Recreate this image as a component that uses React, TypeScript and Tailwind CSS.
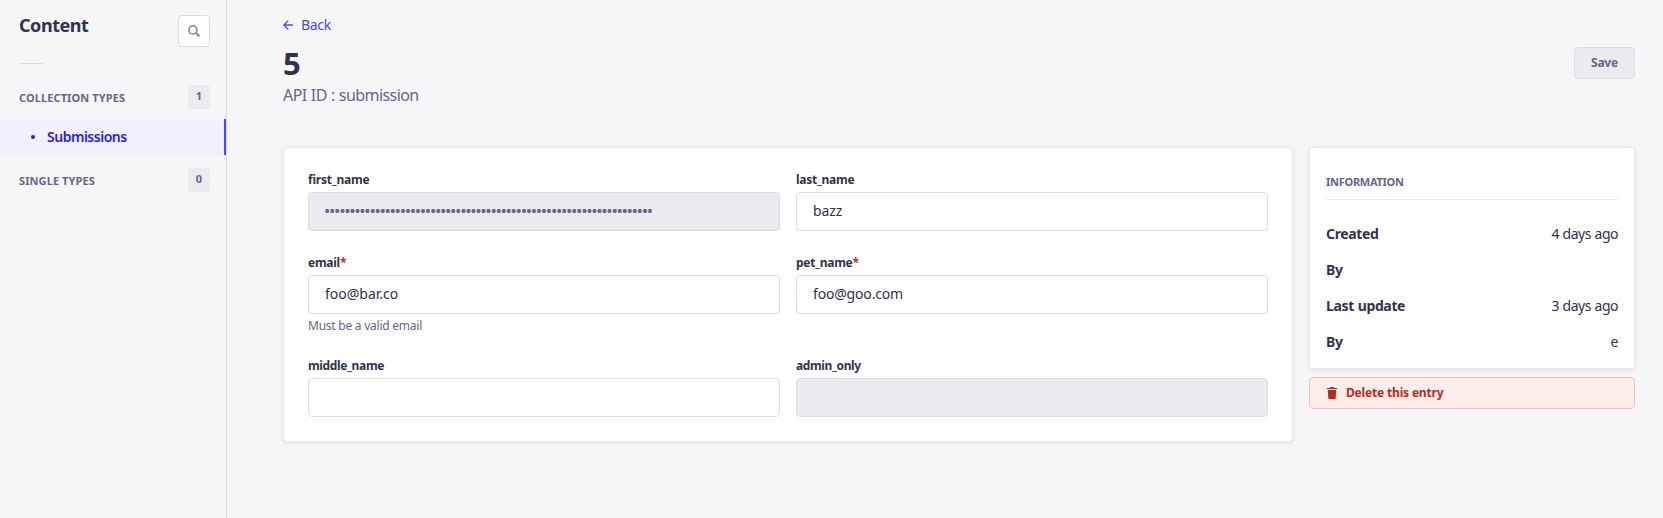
import type { ReactNode } from "react";

function SearchIcon() {
  return (
    <svg width="12" height="12" viewBox="0 0 12 12" fill="none" stroke="#8e8ea9">
      <circle cx="4.9" cy="4.9" r="4" strokeWidth="1.8" />
      <path d="M8 8l3.3 3.3" strokeWidth="2.4" />
    </svg>
  );
}

function BackIcon() {
  return (
    <svg width="10" height="10" viewBox="0 0 10 10" fill="none" stroke="#4945ff" strokeWidth="1.3">
      <path d="M10 5H1M5.2 0.6L0.9 5l4.3 4.4" />
    </svg>
  );
}

function TrashIcon() {
  return (
    <svg width="10" height="12" viewBox="0 0 10 12" fill="#b72b1a">
      <path d="M0 0.9h3.2V0h3.6v0.9H10v1.2H0z" />
      <path d="M0.7 3h8.6L8.6 11.4a.7.7 0 0 1-.7.6H2.1a.7.7 0 0 1-.7-.6z" />
    </svg>
  );
}

function SectionHeader({ title, count }: { title: string; count: number }) {
  return (
    <div className="flex h-6 items-center justify-between pl-[19px] pr-4">
      <h3 className="pt-[2px] text-[11px] font-bold leading-4 tracking-[0.1px] text-[#666687]">{title}</h3>
      <span className="flex h-6 w-[22px] items-center justify-center rounded bg-[#eaeaef] pb-px text-[11px] font-bold text-[#666687]">
        {count}
      </span>
    </div>
  );
}

type FieldProps = {
  label: string;
  labelClass: string;
  required?: boolean;
  disabled?: boolean;
  hint?: string;
  children?: ReactNode;
};

function Field({ label, labelClass, required, disabled, hint, children }: FieldProps) {
  return (
    <div className="flex flex-col gap-1">
      <label className="flex h-4 text-xs font-bold leading-4 text-[#32324d]">
        <span className={labelClass}>{label}</span>
        {required && <span className="text-[#d02b20]">*</span>}
      </label>
      <div
        className={
          disabled
            ? "flex h-[39px] items-center rounded border border-[#dcdce4] bg-[#eaeaef] px-4 text-sm text-[#666687]"
            : "flex h-[39px] items-center rounded border border-[#dcdce4] bg-white px-4 pb-[2px] text-sm text-[#32324d]"
        }
      >
        {children}
      </div>
      {hint && <p className="text-xs leading-4 tracking-[-0.24px] text-[#666687]">{hint}</p>}
    </div>
  );
}

function InfoRow({ label, value }: { label: string; value?: string }) {
  return (
    <div className="flex h-5 items-center justify-between text-sm leading-5 text-[#32324d]">
      <span className="font-bold tracking-[-0.36px] [word-spacing:0.5px]">{label}</span>
      <span className="tracking-[-0.5px] [word-spacing:0.5px]">{value}</span>
    </div>
  );
}

export default function App() {
  return (
    <div className="flex h-[518px] w-full overflow-hidden bg-[#f6f6f9] font-['Noto_Sans',sans-serif] text-[#32324d]">
      <nav className="w-[227px] shrink-0 border-r border-[#dcdce4] pt-[15px]">
        <div className="flex items-start justify-between pl-[19px] pr-4">
          <h2 className="-mt-[1px] text-lg font-bold leading-[22px] tracking-[-0.45px]">Content</h2>
          <button className="flex h-8 w-8 items-center justify-center rounded border border-[#dcdce4] bg-white">
            <SearchIcon />
          </button>
        </div>
        <hr className="ml-[19px] mt-4 h-px w-6 border-0 bg-[#dcdce4]" />
        <div className="mt-[21px]">
          <SectionHeader title="COLLECTION TYPES" count={1} />
        </div>
        <a className="mt-[10px] flex h-9 items-center border-r-2 border-[#4945ff] bg-[#f0f0ff] pl-[31px] text-sm font-semibold text-[#271fe0]">
          <span className="mr-3 h-1 w-1 rounded-full bg-[#271fe0]" />
          <span className="tracking-[-0.49px]">Submissions</span>
        </a>
        <div className="mt-[13px]">
          <SectionHeader title="SINGLE TYPES" count={0} />
        </div>
      </nav>

      <main className="flex-1 pl-14 pr-7 pt-[15px]">
        <a className="flex h-5 items-center gap-2 text-sm leading-5 text-[#4945ff]">
          <BackIcon />
          <span className="tracking-[-0.3px]">Back</span>
        </a>
        <div className="mt-3 flex h-8 items-center justify-between">
          <h1 className="text-[31px] font-bold leading-8">5</h1>
          <button className="flex h-8 items-center rounded border border-[#dcdce4] bg-[#eaeaef] px-4 text-xs font-bold tracking-[-0.2px] text-[#666687]">
            Save
          </button>
        </div>
        <p className="mt-1 text-base leading-6 tracking-[-0.57px] text-[#666687] [word-spacing:0.6px]">API ID : submission</p>

        <div className="mt-10 grid grid-cols-[1010px_326px] items-start gap-4">
          <section className="grid grid-cols-2 gap-x-4 gap-y-6 rounded border border-[#eaeaef] bg-white p-6 shadow-[0_1px_4px_rgba(33,33,52,0.1)]">
            <Field label="first_name" labelClass="tracking-[-0.22px]" disabled>
              <span className="-ml-px pb-px text-[17px] leading-5 tracking-[-1.35px]">{"•".repeat(65)}</span>
            </Field>
            <Field label="last_name" labelClass="tracking-[-0.28px]">
              <span className="tracking-[-0.1px]">bazz</span>
            </Field>
            <Field label="email" labelClass="tracking-[-0.26px]" required hint="Must be a valid email">
              foo@bar.co
            </Field>
            <Field label="pet_name" labelClass="tracking-[-0.28px]" required>
              <span className="tracking-[-0.18px]">foo@goo.com</span>
            </Field>
            <Field label="middle_name" labelClass="tracking-[-0.36px]" />
            <Field label="admin_only" labelClass="tracking-[-0.38px]" disabled />
          </section>

          <aside className="flex flex-col gap-2">
            <section className="h-[222px] rounded border border-[#eaeaef] bg-white px-4 pt-[26px] shadow-[0_1px_4px_rgba(33,33,52,0.1)]">
              <h3 className="text-[11px] font-bold leading-4 tracking-[-0.27px] text-[#666687]">INFORMATION</h3>
              <hr className="mb-6 mt-[9px] h-px border-0 bg-[#eaeaef]" />
              <div className="flex flex-col gap-4">
                <InfoRow label="Created" value="4 days ago" />
                <InfoRow label="By" />
                <InfoRow label="Last update" value="3 days ago" />
                <InfoRow label="By" value="e" />
              </div>
            </section>
            <button className="flex h-8 items-center gap-[9px] rounded border border-[#f5c0b8] bg-[#fcecea] pl-[17px] text-xs font-bold tracking-[-0.17px] text-[#b72b1a]">
              <TrashIcon />
              Delete this entry
            </button>
          </aside>
        </div>
      </main>
    </div>
  );
}
